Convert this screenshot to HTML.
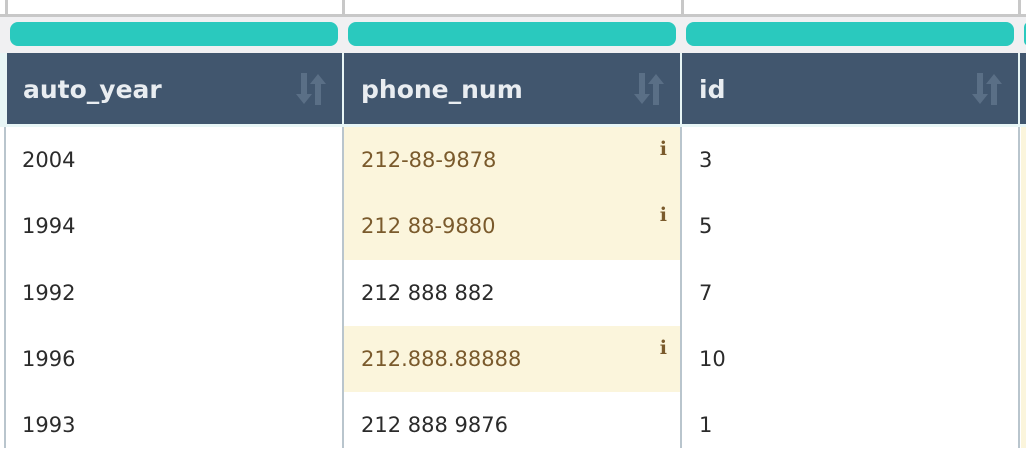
<!DOCTYPE html>
<html><head><style>
*{margin:0;padding:0;box-sizing:border-box}
body{width:1026px;height:448px;overflow:hidden;background:#fff;font-family:"DejaVu Sans","Liberation Sans",sans-serif;position:relative}
.a{position:absolute}
.vl{position:absolute;top:0;width:3px;height:16px;background:#c8c8c8}
.bar{position:absolute;top:22px;height:24px;background:#2ac9be;border-radius:8px}
.hd{position:absolute;top:53px;height:71px;background:#41566e;color:#e9edf1;font-weight:bold;font-size:25px;line-height:74px;padding-left:17px}
.sort{position:absolute;right:16px;top:20px}
.c{position:absolute;height:66px;font-size:21px;color:#2b2b2b;line-height:66px;padding-left:17px}
.y{background:#fbf5dc;color:#7a5a2c}
.i{position:absolute;right:14px;top:-11px;font-weight:bold;font-family:"DejaVu Serif",serif;font-size:19px;color:#7a5a2c}
.bl{position:absolute;top:127px;width:2px;height:321px;background:#b9c5cd}
</style></head><body>
<div class="a" style="left:0;top:14px;width:1026px;height:3px;background:#c8c8c8"></div>
<div class="vl" style="left:5px"></div><div class="vl" style="left:342px"></div><div class="vl" style="left:681px"></div><div class="vl" style="left:1018px"></div>
<div class="a" style="left:0;top:17px;width:1026px;height:36px;background:#f0f0f2"></div>
<div class="bar" style="left:10px;width:328px"></div>
<div class="bar" style="left:348px;width:328px"></div>
<div class="bar" style="left:686px;width:328px"></div>
<div class="bar" style="left:1024px;width:10px"></div>
<div class="a" style="left:0;top:53px;width:1026px;height:74px;background:#e8f6f6"></div>
<div class="hd" style="left:6px;width:336px">auto_year<svg class="sort" width="30" height="32" viewBox="0 0 30 32"><path d="M5 0h6v21h5l-8 10-8-10h5z" fill="#5a6f86"/><path d="M19 32h6V11h5L22 1l-8 10h5z" fill="#5a6f86"/></svg></div>
<div class="hd" style="left:344px;width:336px">phone_num<svg class="sort" width="30" height="32" viewBox="0 0 30 32"><path d="M5 0h6v21h5l-8 10-8-10h5z" fill="#5a6f86"/><path d="M19 32h6V11h5L22 1l-8 10h5z" fill="#5a6f86"/></svg></div>
<div class="hd" style="left:682px;width:336px">id<svg class="sort" width="30" height="32" viewBox="0 0 30 32"><path d="M5 0h6v21h5l-8 10-8-10h5z" fill="#5a6f86"/><path d="M19 32h6V11h5L22 1l-8 10h5z" fill="#5a6f86"/></svg></div>
<div class="hd" style="left:1020px;width:10px"></div>

<div class="c" style="left:5px;top:127px;width:338px">2004</div>
<div class="c" style="left:5px;top:193px;width:338px">1994</div>
<div class="c" style="left:5px;top:260px;width:338px">1992</div>
<div class="c" style="left:5px;top:326px;width:338px">1996</div>
<div class="c" style="left:5px;top:392px;width:338px">1993</div>

<div class="c y" style="left:344px;top:127px;width:337px">212-88-9878<span class="i">i</span></div>
<div class="c y" style="left:344px;top:193px;width:337px;height:67px">212 88-9880<span class="i">i</span></div>
<div class="c" style="left:344px;top:260px;width:337px">212 888 882</div>
<div class="c y" style="left:344px;top:326px;width:337px">212.888.88888<span class="i">i</span></div>
<div class="c" style="left:344px;top:392px;width:337px">212 888 9876</div>

<div class="c" style="left:682px;top:127px;width:337px">3</div>
<div class="c" style="left:682px;top:193px;width:337px">5</div>
<div class="c" style="left:682px;top:260px;width:337px">7</div>
<div class="c" style="left:682px;top:326px;width:337px">10</div>
<div class="c" style="left:682px;top:392px;width:337px">1</div>
<div class="a y" style="left:1021px;top:127px;width:5px;height:321px"></div>

<div class="bl" style="left:4px"></div><div class="bl" style="left:342px"></div><div class="bl" style="left:680px"></div><div class="bl" style="left:1018px"></div>
<div class="a" style="left:5px;top:53px;width:2px;height:71px;background:#e8f6f6"></div>
<div class="a" style="left:342px;top:53px;width:2px;height:71px;background:#e8f6f6"></div>
<div class="a" style="left:680px;top:53px;width:2px;height:71px;background:#e8f6f6"></div>
<div class="a" style="left:1018px;top:53px;width:2px;height:71px;background:#e8f6f6"></div>
</body></html>
